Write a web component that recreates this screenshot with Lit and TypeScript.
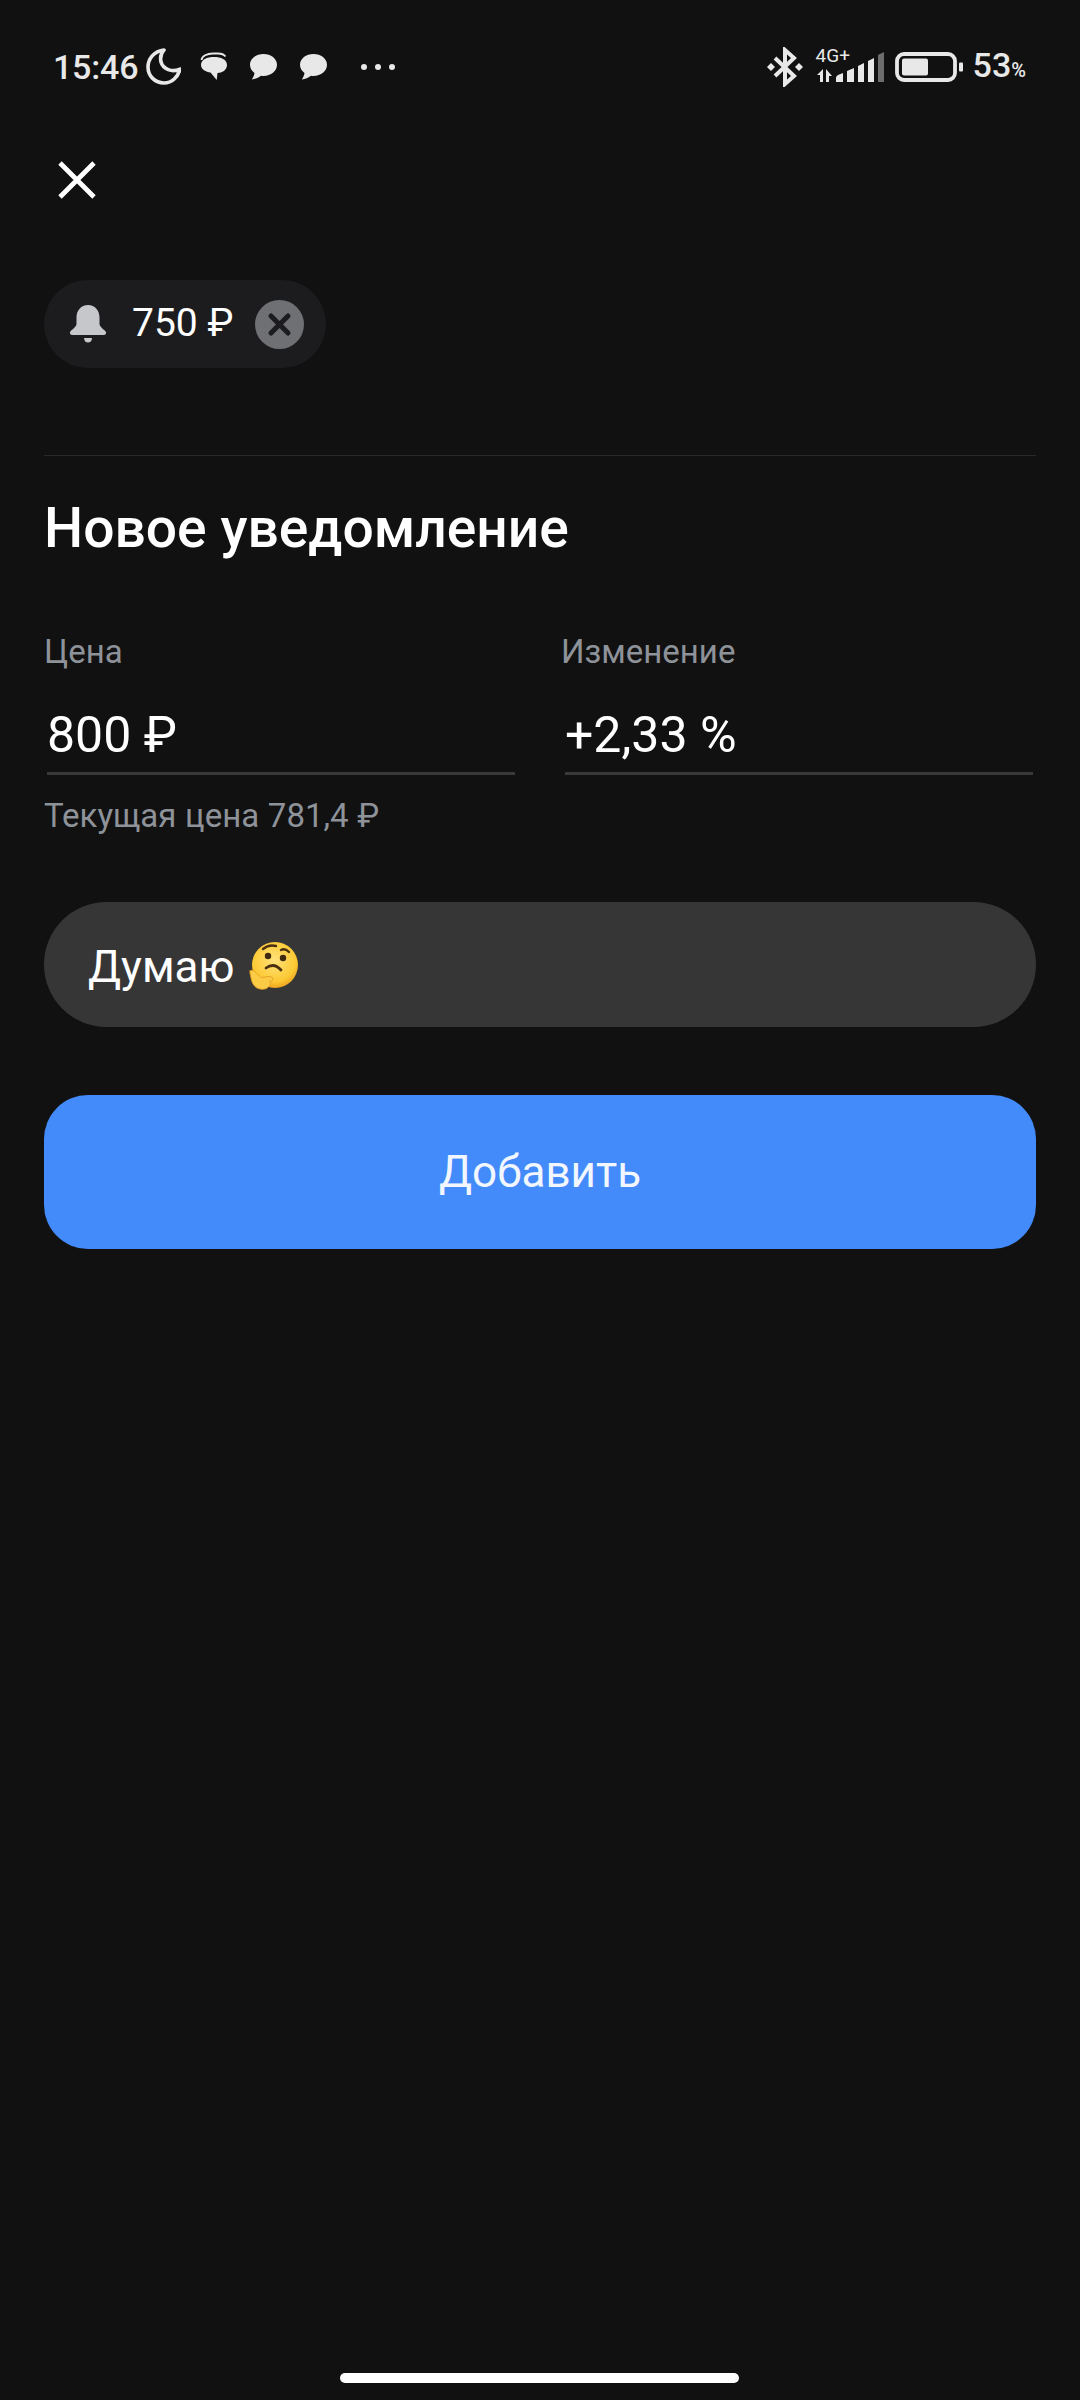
import { LitElement, html, css, svg } from "lit";
import { customElement } from "lit/decorators.js";

const bubble = svg`<path d="M14.500 1C7 1 1 5.600 1 11.800c0 3.400 1.800 6.200 4.500 8.200-.3 2.400-1.500 4.700-2.700 6.500 3.500-.4 6.800-1.800 9.300-3.700.8.100 1.600.2 2.400.2 7.500 0 13.500-4.800 13.500-11.200C28 5.600 22 1 14.500 1z" fill="#e8e8e8"/>`;

@customElement("app-root")
export class AppRoot extends LitElement {
  static styles = css`
    :host { display: block; width: 1080px; height: 2400px; background: #111111; color: #fff; font-family: Roboto, "Noto Sans", sans-serif; position: relative; overflow: hidden; }
    .status { height: 134px; display: flex; align-items: center; padding: 0 54px 0 53px; box-sizing: border-box; color: #e8e8e8; }
    .time { font-size: 34px; font-weight: 500; line-height: 40px; letter-spacing: -0.2px; }
    .moon { margin-left: 7px; }
    .b1 { margin-left: 18px; }
    .b2 { margin-left: 20px; }
    .b3 { margin-left: 22px; }
    .dots { margin-left: 33px; }
    .spacer { flex: 1; }
    .net { position: relative; width: 70px; height: 38px; margin-left: 12px; }
    .fourg { position: absolute; left: 1px; top: -2px; font-size: 19px; line-height: 20px; }
    .net svg { position: absolute; left: 0; top: 0; }
    .batt { margin-left: 9px; }
    .pct { margin-left: 10px; font-size: 34px; font-weight: 500; line-height: 40px; display: flex; align-items: baseline; }
    .pct small { font-size: 20px; font-weight: 500; }
    .close { display: block; margin: 27px 0 0 58px; }
    .chip { display: inline-flex; align-items: center; height: 88px; margin: 81px 0 0 44px; border-radius: 44px; background: #1c1c1f; box-sizing: border-box; padding: 0 22px 0 26px; vertical-align: top; }
    .chip-text { font-size: 39px; line-height: 44px; margin: 0 0 2px 26px; }
    .chip-x { margin-left: 22px; display: block; }
    .divider { height: 1px; background: #2a2a2c; margin: 87px 44px 0; }
    h1 { margin: 42px 0 0 44px; font-size: 55.2px; line-height: 60px; font-weight: 500; }
    .fields { display: grid; grid-template-columns: 517px 475px; margin: 75px 0 0 44px; }
    .label { font-size: 33px; line-height: 38px; color: #8e9299; }
    .value { font-size: 50px; line-height: 58px; margin: 35px 0 0 3px; }
    .rule { height: 3px; background: #38393b; margin: 8px 46px 0 3px; }
    .f2 .rule { margin: 8px 3px 0 4px; }
    .f2 .value { margin-left: 4px; }
    .hint { font-size: 33px; line-height: 38px; word-spacing: 0.5px; color: #8e9299; margin-top: 22px; grid-column: 1 / 3; }
    .input { margin: 67px 44px 0; height: 125px; border-radius: 63px; background: #363636; display: flex; align-items: center; padding-left: 44px; font-size: 44px; color: #fff; gap: 14px; }
    .input span { margin-top: 4px; }
    .input svg { margin-top: 4px; }
    .btn { margin: 68px 44px 0; height: 154px; border-radius: 44px; background: #438bfb; display: flex; align-items: center; justify-content: center; font-size: 44px; color: #f2f7ff; }
    .home { position: absolute; left: 340px; top: 2373px; width: 399px; height: 10px; border-radius: 5px; background: #fff; }
  `;

  render() {
    return html`
      <div class="status">
        <span class="time">15:46</span>
        <svg class="moon" width="36" height="40" viewBox="0 0 36 40"><path d="M19 3C9 4 3 12 3 20c0 9 7 16 16 16 8 0 14-6 16-14-8 4-17 0-19-7-1-5 0-9 3-12z" fill="none" stroke="#e8e8e8" stroke-width="3.600" stroke-linejoin="round"/></svg>
        <svg class="b1" width="30" height="30" viewBox="0 0 30 30"><path d="M2.500 8C3 4 8 1.500 14 1.500h5c3.500 0 6 1 7.500 3" fill="none" stroke="#e8e8e8" stroke-width="1.800"/><path d="M15 5c7 0 13 2.600 13 8 0 5-5 8-9.500 8l-.8 7-6.200-7.500C7 20 2 17.500 2 13c0-5.400 6-8 13-8z" fill="#e8e8e8"/></svg>
        <svg class="b2" width="28" height="28" viewBox="0 0 28 28">${bubble}</svg>
        <svg class="b3" width="28" height="28" viewBox="0 0 28 28">${bubble}</svg>
        <svg class="dots" width="36" height="8" viewBox="0 0 36 8"><circle cx="4" cy="4" r="3" fill="#e8e8e8"/><circle cx="18" cy="4" r="3" fill="#e8e8e8"/><circle cx="32" cy="4" r="3" fill="#e8e8e8"/></svg>
        <span class="spacer"></span>
        <svg width="36" height="40" viewBox="0 0 36 40"><path d="M8 11l19 18-9 8V3l9 8L8 29" fill="none" stroke="#e8e8e8" stroke-width="4" stroke-linejoin="miter"/><path d="M4 16l4 4-4 4-4-4z M32 16l4 4-4 4-4-4z" fill="#e8e8e8"/></svg>
        <div class="net">
          <span class="fourg">4G+</span>
          <svg width="70" height="38" viewBox="0 0 70 38">
            <path d="M2 27l6-6v13H5v-7z M11 21l6 7h-3v6h-3z" fill="#e8e8e8"/>
            <path d="M21 30q0-2 2-3l5-2v9h-7z M32 23l7-3v14h-7z M43 18l6-3v19h-6z M53 13l6-3v24h-6z" fill="#e8e8e8"/>
            <path d="M63 7l6-3v30h-6z" fill="#6d6d6d"/>
          </svg>
        </div>
        <svg class="batt" width="69" height="30" viewBox="0 0 69 30"><rect x="3" y="2" width="58" height="26" rx="7" fill="none" stroke="#e8e8e8" stroke-width="3.800"/><rect x="8" y="6.500" width="26" height="17" rx="2" fill="#e8e8e8"/><rect x="65" y="10.500" width="4" height="9" rx="1" fill="#e8e8e8"/></svg>
        <span class="pct">53<small>%</small></span>
      </div>

      <svg class="close" width="38" height="38" viewBox="0 0 38 38"><path d="M2 2l34 34M36 2L2 36" stroke="#fff" stroke-width="4.800" fill="none"/></svg>

      <div class="chip">
        <svg width="36" height="38" viewBox="0 0 36 38"><path d="M18 0c-7 0-11.500 5.500-11.500 12.500v6.500C6.500 22 1 25 0 27c-.5 1.500.5 3 2 3h32c1.500 0 2.500-1.500 2-3-1-2-6.500-5-6.500-8v-6.500C29.500 5.500 25 0 18 0z" fill="#c6c7cb"/><path d="M14 33h8c0 3-2 4.500-4 4.500S14 36 14 33z" fill="#c6c7cb"/></svg>
        <span class="chip-text">750 ₽</span>
        <svg class="chip-x" width="49" height="49" viewBox="0 0 49 49"><circle cx="24.500" cy="24.500" r="24.500" fill="#6f7074"/><path d="M16 16l17 17M33 16L16 33" stroke="#1c1c1f" stroke-width="5" stroke-linecap="round"/></svg>
      </div>

      <div class="divider"></div>
      <h1>Новое уведомление</h1>

      <div class="fields">
        <div class="f1">
          <div class="label">Цена</div>
          <div class="value">800 ₽</div>
          <div class="rule"></div>
        </div>
        <div class="f2">
          <div class="label">Изменение</div>
          <div class="value">+2,33 %</div>
          <div class="rule"></div>
        </div>
        <div class="hint">Текущая цена 781,4 ₽</div>
      </div>

      <div class="input">
        <span>Думаю</span>
        <svg width="50" height="50" viewBox="0 0 50 50">
          <defs><radialGradient id="f" cx="48%" cy="40%" r="62%"><stop offset="0" stop-color="#ffe27a"/><stop offset="0.75" stop-color="#fcc934"/><stop offset="1" stop-color="#ec9f1e"/></radialGradient></defs>
          <circle cx="27" cy="23" r="23" fill="url(#f)"/>
          <path d="M15 7q6-5 13-3M33 8q4-2 8 2" stroke="#4a3010" stroke-width="2.400" fill="none" stroke-linecap="round"/>
          <circle cx="20" cy="14" r="3.200" fill="#3d2a10"/><circle cx="35" cy="16" r="3.200" fill="#3d2a10"/>
          <path d="M18 26q8-6 15 2" stroke="#4a3010" stroke-width="2.800" fill="none" stroke-linecap="round"/>
          <path d="M2 29c2-1.500 4-.5 6 1.500l5 5 8-1c2.500 0 4 1 4 2.500s-1.500 2.500-3.500 2.500c1.500 1 1.500 2.500.5 3.500-2 3.500-5.500 5-10 4-5.500-1-8-5.500-9-11-.5-3-1.500-5.500-1-7.500z" fill="#fbcb45" stroke="#e39c20" stroke-width="0.800"/>
        </svg>
      </div>

      <div class="btn">Добавить</div>
      <div class="home"></div>
    `;
  }
}
